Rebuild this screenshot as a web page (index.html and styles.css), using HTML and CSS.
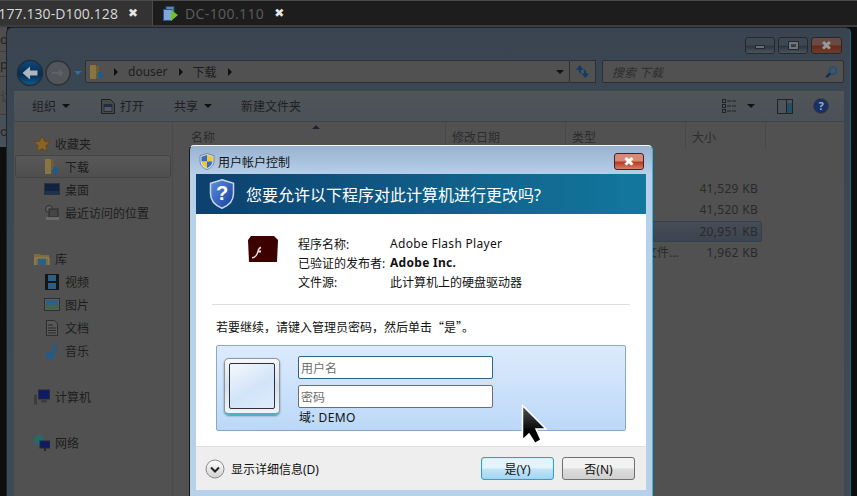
FILE: index.html
```html
<!DOCTYPE html>
<html lang="zh">
<head>
<meta charset="utf-8">
<title>用户帐户控制</title>
<link rel="stylesheet" href="styles.css">
</head>
<body>
<div class="screen">
  <div class="tabbar">
    <div class="tab tab-active"><span class="tab-text">177.130-D100.128</span><span class="tab-close">✖</span></div>
    <div class="tab tab-idle">
      <svg class="tab-icon" viewBox="0 0 15 15"><rect x="3" y="0.5" width="8" height="7" fill="#5d86b8" stroke="#27496f"/><rect x="0.5" y="3.5" width="8" height="11" fill="#7ea6d6" stroke="#2b5686"/><path d="M8 4l7 5-7 6z" fill="#6bc22d"/></svg>
      <span class="tab-text tab-text-dim">DC-100.110</span><span class="tab-close">✖</span>
    </div>
  </div>
  <div class="desk">
    <div class="behind">
      <span class="behind-row behind-a">ol</span><span class="behind-row behind-a">pa</span><span class="behind-row behind-b">访</span><span class="behind-row behind-c">og</span>
    </div>
    <div class="explorer">
      <div class="win-controls">
        <span class="win-btn"><i class="glyph-min"></i></span>
        <span class="win-btn"><i class="glyph-max"></i></span>
        <span class="win-btn win-close">✖</span>
      </div>
      <div class="nav">
        <svg class="nav-arrows" viewBox="0 0 70 28"><defs><linearGradient id="bk" x1="0" y1="0" x2="0" y2="1"><stop offset="0" stop-color="#0e4a7e"/><stop offset=".55" stop-color="#062c52"/><stop offset="1" stop-color="#0f5c8c"/></linearGradient></defs><circle cx="14" cy="14" r="12.500" fill="url(#bk)" stroke="#222e3c" stroke-width="1.500"/><path d="M6.500 14l7.500-6.500v4h7.500v5H14v4z" fill="#aeb6be"/><circle cx="42" cy="14" r="12" fill="#52565a" stroke="#2e3236" stroke-width="1.500"/><path d="M36 14h10m-3-3l3 3-3 3" stroke="#5e6266" stroke-width="2" fill="none"/><path d="M58 12h8l-4 4z" fill="#2f6f96"/></svg>
        <div class="address">
          <svg class="addr-folder" viewBox="0 0 16 16"><path d="M1 1h6v14H1z" fill="#8a7442"/><path d="M7 2h3v12H7z" fill="#6d5c36"/><path d="M9 8h4v3h2l-4 4-4-4h2z" fill="#1c5a92"/></svg>
          <span class="crumb-arrow"></span><span class="crumb">douser</span><span class="crumb-arrow"></span><span class="crumb">下载</span><span class="crumb-arrow"></span>
          <span class="addr-drop"></span>
        </div>
        <div class="refresh"><svg viewBox="0 0 16 16"><path d="M5 1L1 6h3c0 2 1 4 3 5 -1-2-1-3-.500-5H9z" fill="#123a66"/><path d="M11 15l4-5h-3c0-2-1-4-3-5 1 2 1 3 .500 5H7z" fill="#123a66"/></svg></div>
        <div class="search"><span>搜索 下载</span>
          <svg viewBox="0 0 14 14"><circle cx="8.500" cy="5.500" r="3.800" fill="none" stroke="#1c527e" stroke-width="2"/><path d="M5.500 8.500L1.500 12.500" stroke="#10304e" stroke-width="2.400"/></svg>
        </div>
      </div>
      <div class="pane">
        <div class="toolbar">
          <span class="tool tool-org">组织<i class="caret"></i></span>
          <span class="tool tool-open"><svg viewBox="0 0 14 15"><path d="M.5.5h9l4 4v10H.5z" fill="#4a4a48" stroke="#1f1f1f"/><rect x="2.500" y="5" width="9" height="8" fill="#222c48"/><rect x="3.500" y="8" width="7" height="4" fill="#56585c"/></svg>打开</span>
          <span class="tool tool-share">共享<i class="caret"></i></span>
          <span class="tool">新建文件夹</span>
          <span class="tool-right">
            <svg class="view-icon" viewBox="0 0 16 14"><g fill="none" stroke="#222"><rect x=".5" y=".5" width="3" height="3"/><rect x=".5" y="5.500" width="3" height="3"/><rect x=".5" y="10.500" width="3" height="3"/><path d="M5 2h10M5 7h10M5 12h10" stroke-dasharray="4 1"/></g></svg>
            <i class="caret caret-view"></i>
            <svg class="preview-icon" viewBox="0 0 16 15"><rect x=".5" y=".5" width="15" height="14" fill="#505458" stroke="#222"/><rect x="10" y="4" width="5" height="10" fill="#1f5066"/><path d="M9.500 1v13" stroke="#222"/></svg>
            <span class="help">?</span>
          </span>
        </div>
        <div class="columns">
          <aside class="tree">
            <div class="tree-group">
              <div class="tree-head"><svg class="ico" viewBox="0 0 16 16"><path d="M8 0l2.400 5.300 5.600.6-4.200 3.800 1.200 5.700L8 12.500l-5 2.900 1.200-5.700L0 5.900l5.600-.6z" fill="#8a6420" stroke="#5d4212" stroke-width=".6"/></svg>收藏夹</div>
              <div class="tree-item tree-sel"><svg class="ico" viewBox="0 0 16 16"><path d="M1 0h6v15H1z" fill="#8a7442"/><path d="M7 1h3v13H7z" fill="#6d5c36"/><path d="M9 8h4v3h2.500L11 16l-4.500-5H9z" fill="#1c5a92"/></svg>下载</div>
              <div class="tree-item"><svg class="ico" viewBox="0 0 16 14"><rect x=".5" y=".5" width="15" height="11" fill="#12233f" stroke="#333"/><rect x="1" y="8" width="14" height="3" fill="#1c3050"/></svg>桌面</div>
              <div class="tree-item"><svg class="ico" viewBox="0 0 16 16"><circle cx="5" cy="4" r="3.500" fill="#5e5e5e" stroke="#2c2c2c"/><rect x="5" y="4" width="9" height="8" fill="#454545" stroke="#2c2c2c"/><rect x="2" y="12" width="13" height="3" fill="#6a6a6a"/></svg>最近访问的位置</div>
            </div>
            <div class="tree-group">
              <div class="tree-head"><svg class="ico" viewBox="0 0 16 14"><path d="M0 2h6l1 1h8v10H0z" fill="#7e6c3c"/><path d="M4 6h8v7H4z" fill="#2c5e86"/><path d="M1 13V6h14v7" fill="none" stroke="#9a8650"/></svg>库</div>
              <div class="tree-item"><svg class="ico" viewBox="0 0 16 16"><rect x="1" y="0" width="14" height="16" fill="#161616"/><rect x="4" y="1" width="8" height="6" fill="#2c5e88"/><rect x="4" y="9" width="8" height="6" fill="#2c5e88"/></svg>视频</div>
              <div class="tree-item"><svg class="ico" viewBox="0 0 16 14"><rect x=".5" y=".5" width="15" height="12" fill="#5c5c5c" stroke="#2f2f2f"/><rect x="2" y="2" width="12" height="5" fill="#2f5e86"/><rect x="2" y="7" width="12" height="4" fill="#3d6848"/></svg>图片</div>
              <div class="tree-item"><svg class="ico" viewBox="0 0 14 16"><path d="M1.500.5h8l3 3v12h-11z" fill="#585858" stroke="#2e2e2e"/><path d="M3 5h5M3 8h8M3 10.500h8M3 13h8" stroke="#2a2a2a"/></svg>文档</div>
              <div class="tree-item"><svg class="ico" viewBox="0 0 14 16"><ellipse cx="5" cy="12.500" rx="4.500" ry="3.300" fill="#1f5c8c"/><path d="M8.500 12V0c0 3 4 4 4 8" fill="none" stroke="#1f5c8c" stroke-width="1.500"/></svg>音乐</div>
            </div>
            <div class="tree-group">
              <div class="tree-head"><svg class="ico" viewBox="0 0 16 15"><rect x="0" y="5" width="3" height="10" fill="#3c3c3c"/><rect x="4.500" y=".5" width="11" height="9" fill="#0d1a66" stroke="#2c2c2c"/><rect x="7" y="10" width="6" height="3" fill="#3c3c3c"/></svg>计算机</div>
            </div>
            <div class="tree-group">
              <div class="tree-head"><svg class="ico" viewBox="0 0 16 16"><circle cx="5" cy="5" r="5" fill="#1e6a7e"/><path d="M2 3l4-1v3L3 7z" fill="#356e30"/><rect x="6" y="6" width="10" height="7" fill="#0d1a66" stroke="#2a2a2a"/><rect x="10" y="13" width="2" height="3" fill="#2a2a2a"/></svg>网络</div>
            </div>
          </aside>
          <section class="files">
            <div class="file-head">
              <span class="col col-name">名称<i class="sort-mark"></i></span>
              <span class="col col-date">修改日期</span>
              <span class="col col-type">类型</span>
              <span class="col col-size">大小</span>
            </div>
            <div class="file-rows">
              <div class="file-row"><span class="cell-size">41,529 KB</span></div>
              <div class="file-row"><span class="cell-size">41,520 KB</span></div>
              <div class="file-row file-sel"><span class="cell-size">20,951 KB</span></div>
              <div class="file-row"><span class="cell-type">文件...</span><span class="cell-size">1,962 KB</span></div>
            </div>
          </section>
        </div>
      </div>
    </div>

    <div class="dialog">
      <div class="dlg-title">
        <svg class="dlg-shield" viewBox="0 0 16 17"><path d="M8 .5l7 2.200V8c0 4.500-3.500 7.300-7 8.500C4.500 15.300 1 12.500 1 8V2.700z" fill="#d8dee6" stroke="#7a8796"/><path d="M8 2l5.500 1.800V8.500H8z" fill="#f4c52c"/><path d="M8 2L2.500 3.800V8.500H8z" fill="#2f6fc4"/><path d="M8 8.500h5.500C13 12 10.500 14 8 15z" fill="#2f6fc4"/><path d="M8 8.500H2.500C3 12 5.500 14 8 15z" fill="#f4c52c"/></svg>
        <span>用户帐户控制</span>
        <span class="dlg-close">✖</span>
      </div>
      <div class="dlg-inner">
        <div class="banner">
          <svg class="banner-shield" viewBox="0 0 26 30"><defs><linearGradient id="bs" x1="0" y1="0" x2="1" y2="1"><stop offset="0" stop-color="#5f8fdc"/><stop offset="1" stop-color="#123f9c"/></linearGradient></defs><path d="M13 .8l11.500 3.600v10.200c0 7.500-5.800 12.400-11.500 14.600C7.300 27 1.500 22.100 1.500 14.600V4.400z" fill="url(#bs)" stroke="#c9d6e6" stroke-width="1.500"/><text x="13" y="20.500" text-anchor="middle" class="shield-q">?</text></svg>
          <span>您要允许以下程序对此计算机进行更改吗?</span>
        </div>
        <div class="dlg-body">
          <div class="program">
            <svg class="flash" viewBox="0 0 30 26"><path d="M3 0h23l4 4-1 22H1L0 4z" fill="#3c0000"/><path d="M4 21c3 0 4-2 5-5 .7-2.500 1.500-5 4-5.500v2c-1 .3-1.500 1-2 2h2v2h-2.600C9.500 19 8 22 4 22.500z" fill="#e8dcdc"/></svg>
            <dl class="facts">
              <div class="fact"><dt>程序名称:</dt><dd class="latin">Adobe Flash Player</dd></div>
              <div class="fact"><dt>已验证的发布者:</dt><dd class="latin strong">Adobe Inc.</dd></div>
              <div class="fact"><dt>文件源:</dt><dd>此计算机上的硬盘驱动器</dd></div>
            </dl>
          </div>
          <p class="prompt">若要继续，请键入管理员密码，然后单击“是”。</p>
          <div class="cred">
            <div class="tile"><div class="tile-inner"></div></div>
            <div class="cred-fields">
              <div class="field field-on">用户名</div>
              <div class="field">密码</div>
              <div class="domain">域: DEMO</div>
            </div>
          </div>
        </div>
        <div class="dlg-foot">
          <svg class="chevron" viewBox="0 0 20 20"><defs><linearGradient id="cg" x1="0" y1="0" x2="0" y2="1"><stop offset="0" stop-color="#fff"/><stop offset="1" stop-color="#cfcfcf"/></linearGradient></defs><circle cx="10" cy="10" r="9" fill="url(#cg)" stroke="#8a8a8a"/><path d="M6 8.500l4 4 4-4" fill="none" stroke="#222" stroke-width="2"/></svg>
          <span class="details">显示详细信息(D)</span>
          <button class="btn btn-main">是(Y)</button>
          <button class="btn">否(N)</button>
        </div>
      </div>
    </div>

    <svg class="cursor" viewBox="0 0 26 42"><defs><linearGradient id="cu" x1="0" y1="0" x2="0" y2="1"><stop offset="0" stop-color="#555"/><stop offset=".7" stop-color="#000"/></linearGradient></defs><path d="M1.500 1.500V36l6.500-6 6 9.500 6-3.500-5-11h10z" fill="url(#cu)" stroke="#fff" stroke-width="1.500"/></svg>
  </div>
</div>
</body>
</html>
```
FILE: styles.css
```css
* { box-sizing: border-box; }
html, body { margin: 0; padding: 0; }
body { font-family: "Noto Sans", "Noto Sans CJK SC", sans-serif; font-size: 12px; background: #0e0e0e; }
.screen { width: 857px; height: 496px; overflow: hidden; display: flex; flex-direction: column; }

/* tabs */
.tabbar { height: 27px; flex: none; display: flex; background: #1d1d1d; border-top: 1px solid #4a4a4a; border-bottom: 2px solid #3c3c3c; }
.tab { display: flex; align-items: center; height: 24px; white-space: nowrap; }
.tab-active { width: 153px; background: #333; justify-content: flex-end; padding-right: 14px; border-right: 1px solid #4a4a4a; }
.tab-idle { padding-left: 10px; }
.tab-text { font-family: "Open Sans", sans-serif; font-size: 14px; letter-spacing: .1px; color: #d8d8d8; margin-right: 10px; }
.tab-text-dim { color: #5e5e5e; margin-left: 7px; letter-spacing: .4px; margin-right: 10px; }
.tab-close { color: #e6e6e6; font-size: 12px; width: 10px; line-height: 12px; font-family: "DejaVu Sans", sans-serif; }
.tab-icon { width: 15px; height: 15px; }

/* desktop */
.desk { position: relative; flex: 1; background: #0e0e0e; overflow: hidden; }
.behind { position: absolute; left: 0; top: 0; width: 7px; display: flex; flex-direction: column; background: #4e4e4e; color: #222; font-size: 13px; }
.behind-row { line-height: 18px; overflow: hidden; display: flex; align-items: center; white-space: nowrap; border-bottom: 1px solid #3e3e3e; }
.behind-a { height: 25px; }
.behind-b { height: 38px; color: #3a3a3a; }
.behind-c { height: 32px; background: #4a5058; border-bottom: 0; }

/* explorer */
.explorer { position: absolute; left: 6px; top: 0; width: 845px; height: 500px; background: linear-gradient(#3a4450, #3a4752 60px, #3f4a54); border: 1px solid #1c2630; border-right-color: #1c6a7e; border-radius: 6px 6px 0 0; padding-top: 9px; display: flex; flex-direction: column; }
.win-controls { display: flex; justify-content: flex-end; gap: 3px; padding-right: 8px; height: 16px; flex: none; }
.win-btn { width: 30px; height: 17px; border: 1px solid #25292e; border-radius: 3px; background: linear-gradient(#3e4852 45%, #2e363e 55%, #4b555e); display: flex; align-items: center; justify-content: center; }
.glyph-min { display: block; width: 10px; height: 4px; background: #686d72; border: 1px solid #25292e; margin-top: 3px; }
.glyph-max { display: block; width: 9px; height: 7px; border: 2px solid #70757a; outline: 1px solid #25292e; }
.win-close { width: 31px; background: linear-gradient(#6a4a42 45%, #6a2a18 55%, #6c3c2c); color: #9a9a9a; font-size: 13px; line-height: 13px; font-family: "DejaVu Sans", sans-serif; }
.nav { display: flex; align-items: center; height: 23px; margin-top: 7px; flex: none; }
.nav-arrows { width: 70px; height: 28px; margin: 2px -1px 0 9px; flex: none; }
.address { width: 485px; height: 23px; background: #515151; border: 1px solid #2c3034; border-radius: 2px; display: flex; align-items: center; color: #1e1e1e; position: relative; }
.addr-folder { width: 16px; height: 16px; margin: 0 9px 0 3px; }
.crumb { margin: 0 11px 0 10px; white-space: nowrap; }
.crumb-arrow { width: 0; height: 0; border: 4px solid transparent; border-left: 4px solid #111; border-right: 0; }
.addr-drop { margin-left: auto; margin-right: 5px; width: 0; height: 0; border: 4px solid transparent; border-top: 4px solid #111; border-bottom: 0; }
.refresh { width: 26px; height: 23px; background: #515151; border: 1px solid #2c3034; border-left: 0; display: flex; align-items: center; justify-content: center; }
.refresh svg { width: 15px; height: 15px; }
.search { width: 242px; height: 23px; margin-left: 6px; background: #515151; border: 1px solid #2c3034; border-radius: 2px; display: flex; align-items: center; justify-content: space-between; padding: 0 5px 0 9px; font-style: italic; color: #2e2e2e; }
.search svg { width: 13px; height: 14px; }
.pane { margin: 8px 6px 0 7px; flex: 1; display: flex; flex-direction: column; background: #515151; }
.toolbar { height: 31px; flex: none; display: flex; align-items: center; padding-left: 18px; color: #1f1f1f; background: linear-gradient(#515558, #4a5158); border-bottom: 1px solid #3e464c; }
.tool { display: flex; align-items: center; white-space: nowrap; }
.tool svg { width: 14px; height: 15px; margin-right: 5px; }
.tool-org { margin-right: 31px; }
.tool-open { margin-right: 30px; }
.tool-share { margin-right: 29px; }
.caret { display: inline-block; width: 0; height: 0; margin-left: 6px; border: 4px solid transparent; border-top: 4px solid #111; border-bottom: 0; }
.tool-right { margin-left: auto; display: flex; align-items: center; padding-right: 15px; }
.view-icon { width: 16px; height: 14px; }
.caret-view { margin-left: 9px; margin-right: 22px; }
.preview-icon { width: 16px; height: 15px; margin-right: 20px; }
.help { width: 16px; height: 16px; border-radius: 50%; background: #16306a; border: 1px solid #3c3c3c; box-shadow: 0 0 0 1px #555; color: #a8acb0; font-weight: 700; text-align: center; line-height: 14px; font-size: 11px; }
.columns { flex: 1; display: flex; min-height: 0; }

/* tree */
.tree { width: 159px; flex: none; padding: 10px 1px 0; border-right: 1px solid #444c52; color: #1d1d1d; }
.tree-group { margin-bottom: 23px; }
.tree-head, .tree-item { height: 23px; display: flex; align-items: center; white-space: nowrap; }
.tree-head { padding-left: 19px; }
.tree-item { padding-left: 29px; }
.ico { width: 16px; height: 16px; margin-right: 5px; flex: none; }
.tree-sel { border: 1px solid #444; border-radius: 3px; background: linear-gradient(#595959, #4e4e4e); padding-left: 28px; }

/* files */
.files { flex: 1; color: #2a2a2a; }
.file-head { display: flex; height: 28px; align-items: center; position: relative; color: #2c2c2c; }
.col { height: 28px; line-height: 32px; border-right: 1px solid #484848; flex: none; position: relative; }
.col-name { width: 273px; padding-left: 18px; }
.col-date { width: 120px; padding-left: 6px; }
.col-type { width: 120px; padding-left: 6px; }
.col-size { width: 80px; padding-left: 6px; }
.sort-mark { position: absolute; left: 139px; top: 3px; width: 0; height: 0; border: 4px solid transparent; border-bottom: 4px solid #223; border-top: 0; }
.file-rows { padding-top: 28px; width: 589px; }
.file-row { height: 21px; display: flex; align-items: center; justify-content: flex-end; padding-right: 4px; margin-bottom: .3px; }
.cell-size { letter-spacing: .3px; }
.file-sel { margin-left: 300px; background: linear-gradient(#454c56, #3c4450); border: 1px solid #34404e; border-radius: 2px; padding-right: 3px; }
.cell-type { margin-right: 28px; }

/* dialog */
.dialog { position: absolute; left: 189px; top: 118px; width: 464px; height: 352px; background: linear-gradient(#98b2d0, #b8d1eb 30px); border: 1px solid #101820; border-right-color: #35b8e0; border-top-color: #f4f6f8; border-radius: 5px 5px 0 0; padding: 0 6px; color: #111; display: flex; flex-direction: column; }
.dlg-title { height: 28px; flex: none; display: flex; align-items: center; position: relative; padding: 3px 0 0 3px; color: #111; }
.dlg-shield { width: 16px; height: 17px; margin-right: 3px; }
.dlg-close { margin-left: auto; width: 30px; height: 17px; border: 1px solid #4c2020; border-radius: 3px; background: linear-gradient(#d88a78 45%, #b63a20 55%, #d4806c); color: #fff; font-family: "DejaVu Sans", sans-serif; font-size: 13px; text-align: center; line-height: 15px; margin-right: 2px; }
.dlg-inner { flex: 1; display: flex; flex-direction: column; background: #fff; margin-bottom: 6px; min-height: 0; }
.banner { height: 40px; flex: none; display: flex; align-items: center; background: linear-gradient(90deg, #0d406e, #13789e); color: #fff; font-size: 16px; white-space: nowrap; padding-left: 13px; }
.banner-shield { width: 26px; height: 30px; margin-right: 11px; flex: none; }
.shield-q { font-size: 20px; font-weight: 700; fill: #fff; font-family: "Liberation Sans", sans-serif; }
.dlg-body { flex: 1; padding: 0 16px 0 20px; min-height: 0; }
.program { display: flex; height: 91px; padding: 22px 0 0 36px; border-bottom: 1px solid #dedede; width: 418px; margin-left: -4px; }
.flash { width: 30px; height: 26px; flex: none; margin-right: 20px; }
.facts { margin: -2px 0 0; }
.fact { display: flex; height: 19px; align-items: center; white-space: nowrap; }
.fact:last-child { height: 20px; }
.fact dt { width: 92px; }
.fact dd { margin: 0; }
.latin { letter-spacing: .3px; }
.strong { font-weight: 700; }
.prompt { margin: 13px 0 9px; height: 18px; line-height: 18px; white-space: nowrap; font-family: "Noto Sans CJK SC", sans-serif; }
.cred { width: 410px; height: 86px; display: flex; background: linear-gradient(#dcebfd, #bcd8f8); border: 1px solid #8aa8cc; border-radius: 2px; }
.tile { width: 56px; height: 57px; margin: 12px 18px 0 7px; border-radius: 5px; border: 1px solid #8a96a2; border-bottom: 2px solid #4fb0c8; background: linear-gradient(#f6f8fa, #d8e2ec 50%, #f0f4f8); padding: 4px; box-shadow: 0 1px 2px #708090; }
.tile-inner { width: 100%; height: 100%; border: 1px solid #2e3238; border-radius: 2px; background: linear-gradient(150deg, #f4f8fd, #d2e4f9 55%, #dfebfb); }
.cred-fields { width: 195px; padding-top: 10px; }
.field { height: 23px; background: #fff; border: 1px solid #6d6d6d; border-radius: 2px; color: #6d6d6d; padding-left: 2px; line-height: 23px; margin-bottom: 6px; }
.field-on { border-color: #2c628c; }
.domain { margin: -5px 0 0 1px; height: 18px; line-height: 18px; letter-spacing: .4px; }
.dlg-foot { height: 44px; flex: none; background: #eee; border-top: 1px solid #dfdfdf; display: flex; align-items: center; padding-left: 9px; }
.chevron { width: 20px; height: 20px; margin-right: 6px; }
.details { white-space: nowrap; }
.btn { width: 73px; height: 23px; font: inherit; color: #111; padding: 0; border: 1px solid #707070; border-radius: 3px; background: linear-gradient(#f2f2f2 45%, #dcdcdc 55%, #cfcfcf); }
.btn-main { margin-left: auto; margin-right: 8px; border-color: #2f9fd6; background: linear-gradient(#e4f4fc 45%, #bfe3f6 55%, #a4d6f2); box-shadow: inset 0 0 1px #40d0f8; }
.dlg-foot .btn:last-child { margin-right: 11px; }

/* pointer */
.cursor { position: absolute; left: 521px; top: 377px; width: 26px; height: 42px; }
```
